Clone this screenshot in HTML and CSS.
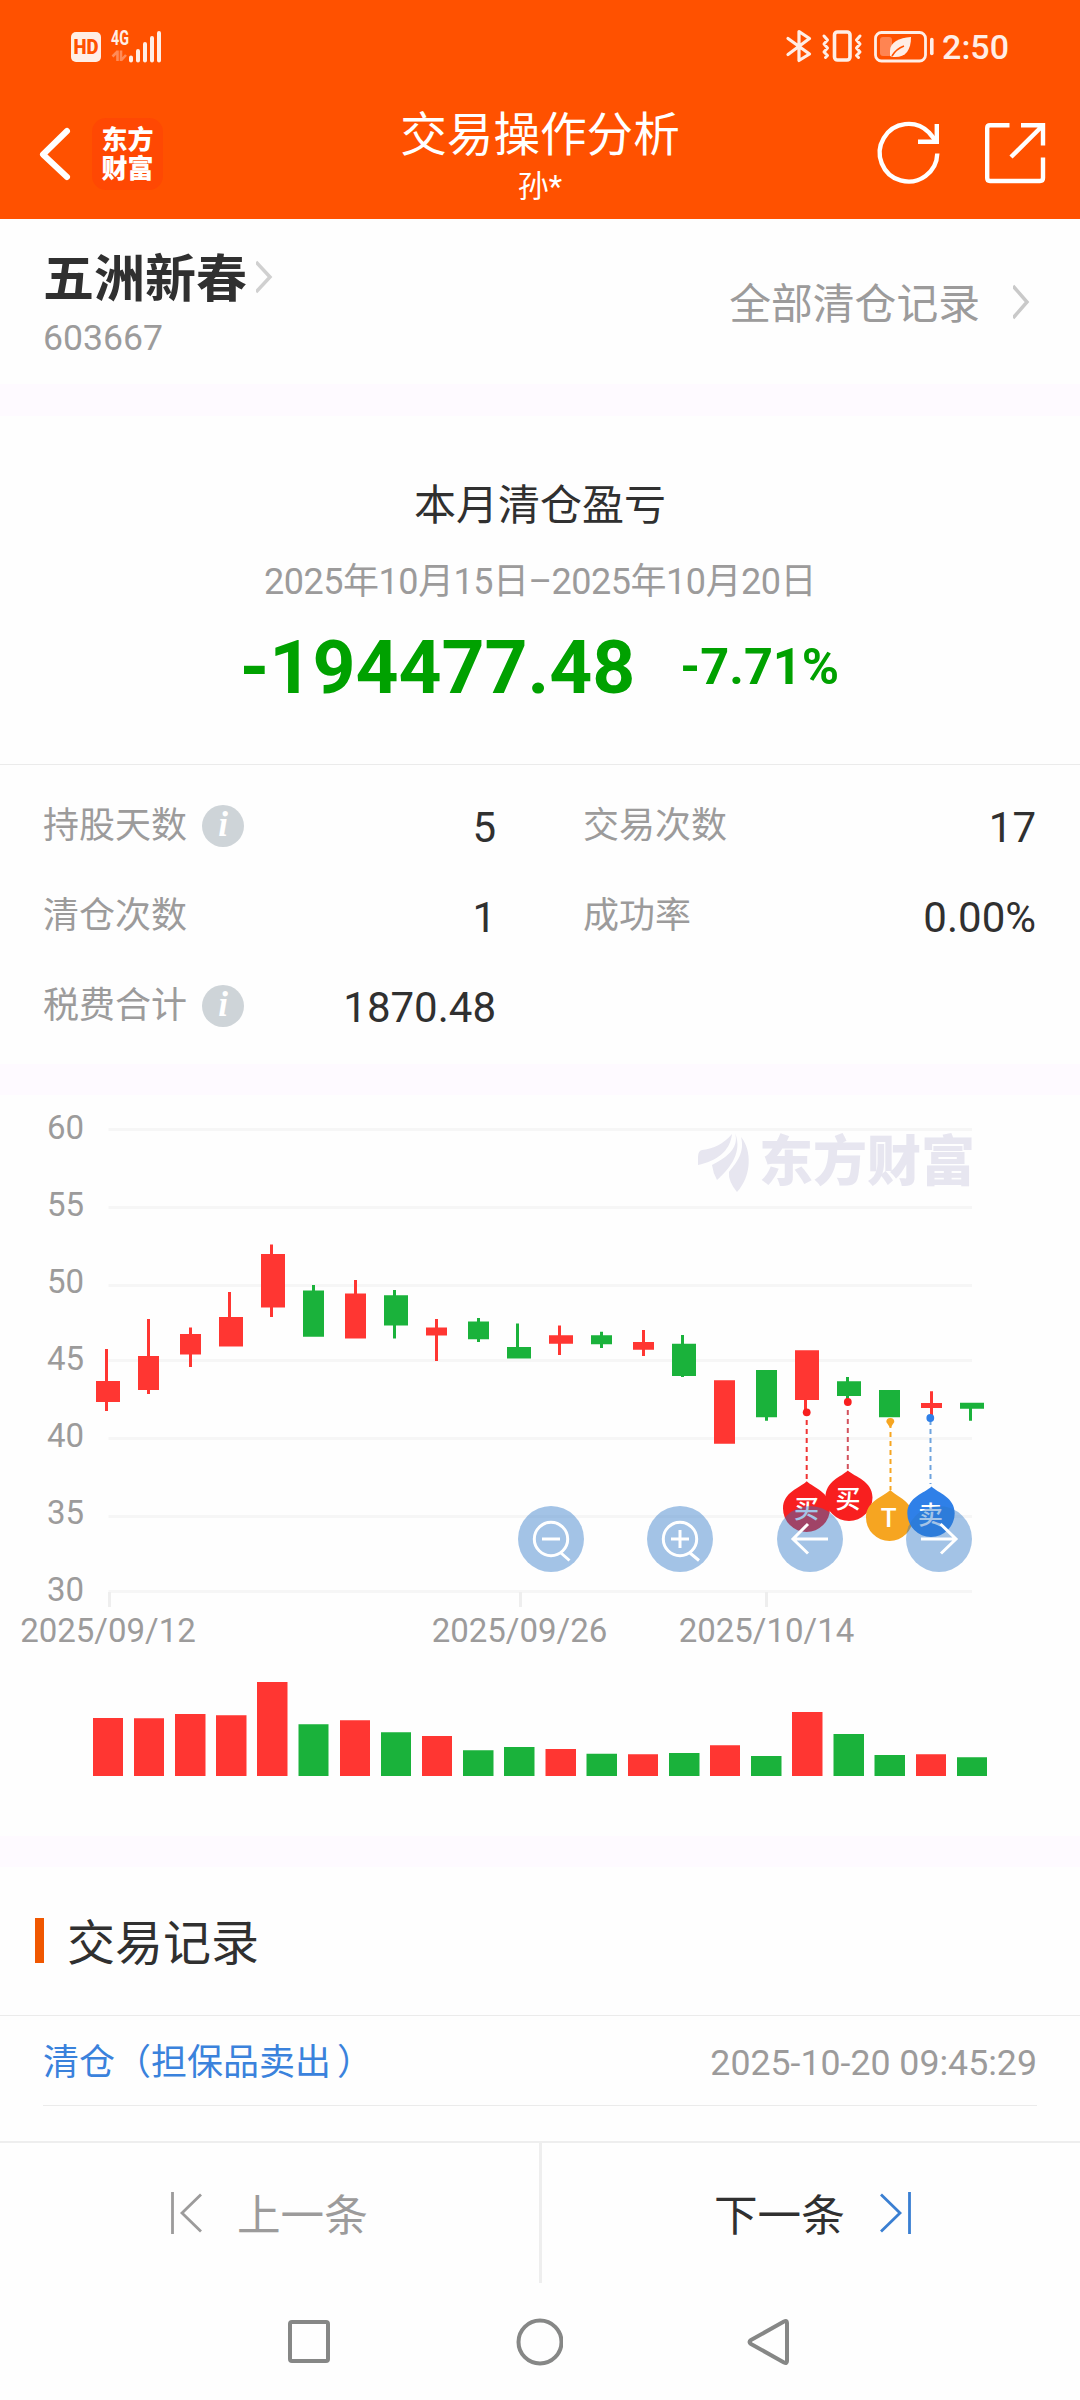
FILE: index.html
```html
<!DOCTYPE html>
<html lang="zh-CN">
<head>
<meta charset="utf-8">
<title>交易操作分析</title>
<link rel="stylesheet" href="styles.css">
</head>
<body>
<div class="app">
  <header class="header">
    <div class="status">
      <svg class="status-left" viewBox="70 26 94 40" width="94" height="40">
        <rect x="71" y="32" width="30" height="30" rx="5" fill="#ffeee6"/>
        <text x="86" y="53.5" class="hd" text-anchor="middle" textLength="25" lengthAdjust="spacingAndGlyphs">HD</text>
        <text x="111" y="45" class="net" textLength="18" lengthAdjust="spacingAndGlyphs">4G</text>
        <path d="M117.500 50.500v10.500M117.500 51.500l-5 5M121 50.500v10.500M121 60.500l5-5.500" stroke="#ff8b57" stroke-width="2.600" fill="none"/>
        <path d="M131 57.500v3M138 51v9.500M145 44v16.500M152 38v22.500M159 33v27.500" stroke="#ffeee6" stroke-width="4" stroke-linecap="round"/>
      </svg>
      <div class="status-right">
        <svg viewBox="785 26 150 40" width="150" height="40" fill="none" stroke="#ffeee6">
          <path d="M788 38.500L809.500 54L799 60.500V31.500L809.500 38.500L788 54.500" stroke-width="3.200" stroke-linejoin="round" stroke-linecap="round"/>
          <rect x="834.500" y="32" width="15.500" height="28" rx="3" stroke-width="3.600"/>
          <path d="M824 36l3.500 4-3.500 4 3.500 4-3.500 4 3.500 3.500-2 2M860 36l-3.500 4 3.500 4-3.500 4 3.500 4-3.500 3.500 2 2" stroke-width="3" stroke-linejoin="round" stroke-linecap="round"/>
          <rect x="875.500" y="32.500" width="50" height="28.500" rx="6" stroke-width="2.800"/>
          <rect x="880" y="37" width="12" height="19" rx="3" fill="#ff8452" stroke="none"/>
          <path d="M911 37C899 38 890 42 890 51V56L893 57C905 58 911 51 911 37Z" fill="#ffeee6" stroke="none"/>
          <path d="M892 56Q896 49 904 46" stroke="#ff5100" stroke-width="1.600"/>
          <path d="M931.800 39.500v14" stroke-width="3.600" stroke-linecap="round"/>
        </svg>
        <span class="clock">2:50</span>
      </div>
    </div>
    <div class="nav">
      <div class="nav-left">
        <svg width="34" height="56" viewBox="0 0 34 56" fill="none" stroke="#fff" stroke-width="6" stroke-linecap="round" stroke-linejoin="round"><path d="M29 5L5 28.500L29 51"/></svg>
        <div class="logo"><span>东方</span><span>财富</span></div>
      </div>
      <div class="nav-title"><h1>交易操作分析</h1><p>孙*</p></div>
      <svg class="nav-actions" viewBox="874 118 174 70" width="174" height="70" fill="none" stroke="#fff" stroke-width="4.400">
        <path d="M937.300 153.500A28.800 28.800 0 1 1 929 132.500L936 141"/>
        <path d="M936.800 124V141.800H918"/>
        <path d="M1009.500 125.200H990Q987.200 125.200 987.200 128V178Q987.200 181 990 181H1040Q1043 181 1043 178V157.500M1021 125.200H1043V145.500M1043 125.200L1011 157"/>
      </svg>
    </div>
  </header>

  <section class="stock">
    <div>
      <div class="stock-name">五洲新春<svg width="18" height="34" viewBox="0 0 18 34" fill="none" stroke="#d0d0d0" stroke-width="3.500"><path d="M0 2L14 17L0 32"/></svg></div>
      <div class="stock-code">603667</div>
    </div>
    <div class="all-records">全部清仓记录<svg width="18" height="36" viewBox="0 0 18 36" fill="none" stroke="#c9c9c9" stroke-width="3.500"><path d="M0 2L14 18L0 34"/></svg></div>
  </section>
  <div class="band band-tall"></div>

  <section class="summary">
    <h2>本月清仓盈亏</h2>
    <p class="period">2025年10月15日–2025年10月20日</p>
    <div class="profit"><span class="amount">-194477.48</span><span class="percent">-7.71%</span></div>
  </section>

  <section class="stats">
    <div class="stat"><span class="label">持股天数</span><i class="info">i</i><b>5</b></div>
    <div class="stat"><span class="label">交易次数</span><b>17</b></div>
    <div class="stat"><span class="label">清仓次数</span><b>1</b></div>
    <div class="stat"><span class="label">成功率</span><b>0.00%</b></div>
    <div class="stat"><span class="label">税费合计</span><i class="info">i</i><b>1870.48</b></div>
  </section>
  <div class="band"></div>

  <svg class="chart" viewBox="0 1095 1080 741" width="1080" height="741">
    <path d="M108.500 1129.500H972M108.500 1207.500H972M108.500 1285.500H972M108.500 1360.500H972M108.500 1438.500H972M108.500 1516.500H972M108.500 1591.500H972" stroke="#f6f6f6" stroke-width="3"/>
    <path d="M109.500 1592V1607M520.500 1592V1607M766.500 1592V1607" stroke="#eee" stroke-width="3"/>
    <g class="axis" text-anchor="end">
      <text x="84" y="1138.500">60</text><text x="84" y="1215.500">55</text><text x="84" y="1292.500">50</text><text x="84" y="1369.500">45</text><text x="84" y="1446.500">40</text><text x="84" y="1524">35</text><text x="84" y="1601">30</text>
    </g>
    <g class="axis" text-anchor="middle">
      <text x="108" y="1641.500">2025/09/12</text><text x="519.500" y="1641.500">2025/09/26</text><text x="766.500" y="1641.500">2025/10/14</text>
    </g>
    <!-- watermark -->
    <g fill="#e7e6f0">
      <path d="M732 1134C724 1144 712 1149 702 1150Q698 1151 698 1157V1165C716 1161 730 1152 732 1134Z"/>
      <path d="M735 1133C739 1146 730 1156 712 1165Q713 1173 717 1180C726 1172 744 1154 735 1133Z"/>
      <path d="M741 1137C745 1152 737 1162 729 1172Q728 1181 737 1192C752 1176 752 1150 741 1137Z"/>
      <text x="759" y="1180.500" class="watermark" textLength="216" lengthAdjust="spacingAndGlyphs">东方财富</text>
    </g>
    <!-- rising candles -->
    <path fill="#ff3632" d="M96 1381h24v21h-24zM105 1349h3V1411h-3zM138 1356h21v34h-21zM147 1319h3V1394h-3zM180 1334h21v20.500h-21zM189 1327.500h3V1367h-3zM219 1317h24v29.500h-24zM228 1292h3V1340h-3zM261 1254h24v53.500h-24zM270 1244.500h3V1317h-3zM345 1293.500h21v45h-21zM354 1280h3V1330h-3zM426 1327.500h21v8h-21zM435 1319h3V1361h-3zM549 1335.300h24v8.500h-24zM558 1325.500h3V1355h-3zM633 1342h21v7.700h-21zM642 1330h3V1356h-3zM714 1380.300h21v63.400h-21zM795 1350.300h24v49.700h-24zM804 1390h3V1410h-3zM921 1403h21v5h-21zM930 1391.300h3V1416h-3z"/>
    <!-- falling candles -->
    <path fill="#1ab23b" d="M303 1290.500h21v46.300h-21zM312 1285h3V1300h-3zM384 1295.300h24v30.300h-24zM393 1290h3V1338.600h-3zM468 1321.600h21v17.700h-21zM477 1318h3V1342h-3zM507 1347h24v11.600h-24zM516 1323.400h3V1350h-3zM591 1335.300h21v9h-21zM600 1331.700h3V1348h-3zM672 1343.700h24v32.300h-24zM681 1335h3V1377h-3zM756 1370h21v47.300h-21zM765 1410h3V1420.700h-3zM837 1381.300h24v14.700h-24zM846 1377h3V1400h-3zM879 1390h21v27.300h-21zM960 1402.700h24v6h-24zM969 1405h3V1420.700h-3z"/>
    <!-- trade markers -->
    <g fill="none" stroke-width="2" stroke-dasharray="5 4">
      <path d="M806.700 1420V1482" stroke="#ef3434"/><path d="M847.800 1410V1472" stroke="#d2525d"/><path d="M890.500 1423V1490" stroke="#f6a521"/><path d="M930.500 1420V1484" stroke="#6fa3dd"/>
    </g>
    <g class="marker" text-anchor="middle">
      <g fill="#f81f1f"><circle cx="806.700" cy="1412.300" r="3.900"/><path d="M806.700 1481.300C814 1488 830 1492 830 1508.500A23.500 23.500 0 1 1 783 1508.500C783 1492 800 1488 806.700 1481.300Z"/></g>
      <text x="806.500" y="1518">买</text>
      <g fill="#f81f1f"><circle cx="847.800" cy="1402" r="3.900"/><path d="M847.800 1470.500C855 1477 872.500 1481 872.500 1497.500A23.500 23.500 0 1 1 825.500 1497.500C825.500 1481 841 1477 847.800 1470.500Z"/></g>
      <text x="848" y="1507.500">买</text>
      <g fill="#f6a521"><path d="M890.300 1428l-4-6a4 4 0 1 1 8 0zM890.300 1490C897 1497 913 1501 913 1517.500A23.500 23.500 0 1 1 866 1517.500C866 1501 883 1497 890.300 1490Z"/></g>
      <text x="888.700" y="1526.500" class="t-mark">T</text>
      <g fill="#2f80e8"><circle cx="930.300" cy="1418" r="3.900"/><path d="M931.500 1486.500C938 1493 954.700 1497 954.700 1513.300A23.700 23.700 0 1 1 907.300 1513.300C907.300 1497 925 1493 931.500 1486.500Z"/></g>
      <text x="930.500" y="1523.500">卖</text>
    </g>
    <!-- zoom and pan controls -->
    <g fill="#2d76c8" fill-opacity=".43"><circle cx="551" cy="1539" r="33"/><circle cx="680" cy="1539" r="33"/><circle cx="810" cy="1539" r="33"/><circle cx="939" cy="1539" r="33"/></g>
    <g fill="none" stroke="#fff" stroke-width="3">
      <circle cx="551" cy="1539" r="16.700"/><path d="M561 1553L569.500 1560.500M542 1539H560"/>
      <circle cx="680" cy="1539" r="16.700"/><path d="M690 1553L699 1560.500M671 1539H689M680 1530V1548"/>
      <path d="M828 1539H793M808 1524L793 1539L808 1553.500M921 1539H956M940.500 1524L956 1539L941 1553.500"/>
    </g>
    <!-- volume -->
    <path fill="#ff3632" d="M93 1718h30v58h-30zM134 1718.300h30V1776h-30zM175 1714h30.500v62H175zM216 1715.300h30.500V1776H216zM257 1682h30.500v94H257zM340 1720.300h30V1776h-30zM422 1736h30v40h-30zM545.500 1749h30.500v27h-30.500zM628 1754.300h30V1776h-30zM710 1745.300h30V1776h-30zM792 1712h30.500v64H792zM916 1754.300h30V1776h-30z"/>
    <path fill="#1ab23b" d="M298.500 1724.300h30V1776h-30zM381 1732.300h30V1776h-30zM463 1750.300h30.500V1776H463zM504 1747h30.500v29H504zM586.500 1753.700H617V1776h-30.500zM669 1753h30.500v23H669zM751 1756h30.500v20H751zM833.500 1734H864v42h-30.500zM874.500 1755h30.500v21h-30.500zM957 1757.300h30V1776h-30z"/>
  </svg>
  <div class="band"></div>

  <section class="records">
    <h2>交易记录</h2>
    <div class="record"><a>清仓（担保品卖出<span class="paren-close">）</span></a><time>2025-10-20 09:45:29</time></div>
  </section>

  <footer class="pager">
    <div class="prev"><svg width="32" height="44" viewBox="0 0 32 44" fill="none" stroke="#9c9b9b" stroke-width="2.800"><path d="M2.500 1V43M31 3.500L12 22L31 40.500"/></svg><span>上一条</span></div>
    <div class="next"><span>下一条</span><svg width="32" height="44" viewBox="0 0 32 44" fill="none" stroke="#3a7fd2" stroke-width="2.800"><path d="M29.500 1V43M1 3.500L20 22L1 40.500"/></svg></div>
  </footer>
  <div class="sysnav">
    <svg width="44" height="48" viewBox="0 0 44 48"><rect x="3" y="4" width="38" height="39" rx="2"/></svg>
    <svg width="48" height="48" viewBox="0 0 48 48"><circle cx="25" cy="24" r="21.500"/></svg>
    <svg width="44" height="50" viewBox="0 0 44 50"><path d="M37 4.500Q40 3 40 6V44Q40 47 37 45.500L4 27Q1 25 4 23Z"/></svg>
  </div>
</div>
</body>
</html>
```
FILE: styles.css
```css
* { box-sizing: border-box; margin: 0; padding: 0; }
body { width: 1080px; background: #fefefe; font-family: Roboto, "Noto Sans CJK SC", sans-serif; color: #303030; }
svg { display: block; flex: none; }
.app { width: 1080px; height: 2400px; overflow: hidden; display: flex; flex-direction: column; }
.app > * { flex: none; }

.header { height: 219px; background: #ff5100; color: #fff; display: flex; flex-direction: column; }
.status { height: 92px; padding: 0 71px 0 70px; display: flex; justify-content: space-between; align-items: center; }
.status-right { display: flex; align-items: center; gap: 7px; }
.hd { font-size: 20px; font-weight: 900; fill: #ff5100; }
.net { font-size: 19.500px; font-weight: 700; fill: #ffeee6; }
.clock { font-size: 34px; line-height: 40px; font-weight: 500; color: #ffeee6; padding-top: 2px; }
.nav { height: 127px; padding: 0 32px 0 38px; display: grid; grid-template-columns: 220px 1fr 220px; align-items: center; }
.nav-left { display: flex; align-items: center; gap: 20px; padding-bottom: 4px; }
.logo { width: 71px; height: 72px; padding-top: 3px; border-radius: 14px; background: #ff4803; display: flex; flex-direction: column; align-items: center; justify-content: center; font-size: 26px; line-height: 29px; font-weight: 800; }
.nav-title { text-align: center; padding: 3px 6px 0 0; }
.nav-title h1 { font-size: 46.600px; line-height: 60px; font-weight: 400; }
.nav-title p { font-size: 31px; line-height: 44px; }
.nav-actions { justify-self: end; margin-bottom: 5px; }

.stock { height: 165px; padding: 28px 43px 0; display: flex; justify-content: space-between; }
.stock-name { display: flex; align-items: center; gap: 9px; font-size: 51px; line-height: 66px; font-weight: 700; }
.stock-name svg { margin-bottom: 7px; }
.stock-code { font-size: 35.600px; line-height: 44px; margin-top: 3px; color: #9c9b9b; }
.all-records { align-self: flex-start; display: flex; align-items: center; gap: 33px; margin: 28px 6px 0 0; font-size: 41.800px; line-height: 60px; color: #9c9b9b; }
.all-records svg { margin-bottom: 6px; }
.band { height: 31px; background: #fefaff; }
.band-tall { height: 32px; }

.summary { height: 349px; padding-top: 60px; border-bottom: 1px solid #ebebeb; text-align: center; }
.summary h2 { font-size: 42px; line-height: 60px; font-weight: 400; }
.period { margin-top: 21px; font-size: 36px; line-height: 50px; letter-spacing: -.5px; color: #9c9b9b; }
.profit { margin: 15px 1px 0 0; display: flex; justify-content: center; align-items: center; gap: 45px; color: #00a100; font-weight: 700; line-height: 90px; }
.amount { font-size: 75px; }
.percent { font-size: 50.500px; }

.stats { height: 299px; padding: 16px 43px 0; display: grid; grid-template-columns: 454px 454px; column-gap: 86px; grid-auto-rows: 90px; }
.stat { display: flex; align-items: center; color: #9c9b9b; font-size: 36px; line-height: 50px; }
.stat b { margin-left: auto; padding: 4px 1px 0 0; color: #303030; font-size: 42px; font-weight: 400; }
.info { width: 42px; height: 42px; margin-left: 15px; border-radius: 50%; background: #ced4d8; color: #fff; font: italic 700 35px/39px "Liberation Serif", serif; text-align: center; }

.axis { font-size: 33px; fill: #9c9b9b; }
.watermark { font-size: 54px; font-weight: 900; font-family: "Noto Sans CJK SC", sans-serif; }
.marker text { font-size: 25px; fill: #fff; font-weight: 500; }
.marker .t-mark { font-size: 26px; }

.records { height: 274px; }
.records h2 { height: 149px; padding: 5px 0 0 35px; border-bottom: 1px solid #ebebeb; display: flex; align-items: center; gap: 23px; font-size: 48px; line-height: 60px; font-weight: 400; }
.records h2::before { content: ""; width: 9px; height: 45px; margin-bottom: 6px; background: #f05700; }
.record { height: 90px; margin: 0 43px; padding-top: 4px; border-bottom: 1px solid #ebebeb; display: flex; justify-content: space-between; align-items: center; font-size: 36px; line-height: 50px; color: #9c9b9b; }
.record a { color: #3a82dc; padding-top: 1px; }
.record time { font-size: 35.700px; }
.paren-close { margin-left: 6px; }

.pager { height: 142px; border-top: 2px solid #eee; display: grid; grid-template-columns: 542px 538px; font-size: 43.600px; line-height: 60px; }
.pager > div { display: flex; align-items: center; gap: 35px; }
.pager span { padding-top: 7px; }
.prev { padding-left: 170px; color: #9c9b9b; border-right: 3px solid #eee; }
.next { padding-left: 172px; }
.sysnav { height: 117px; padding: 0 289px 0 287px; display: flex; justify-content: space-between; align-items: center; }
.sysnav svg { fill: none; stroke: #868786; stroke-width: 4; stroke-linejoin: round; }
```
